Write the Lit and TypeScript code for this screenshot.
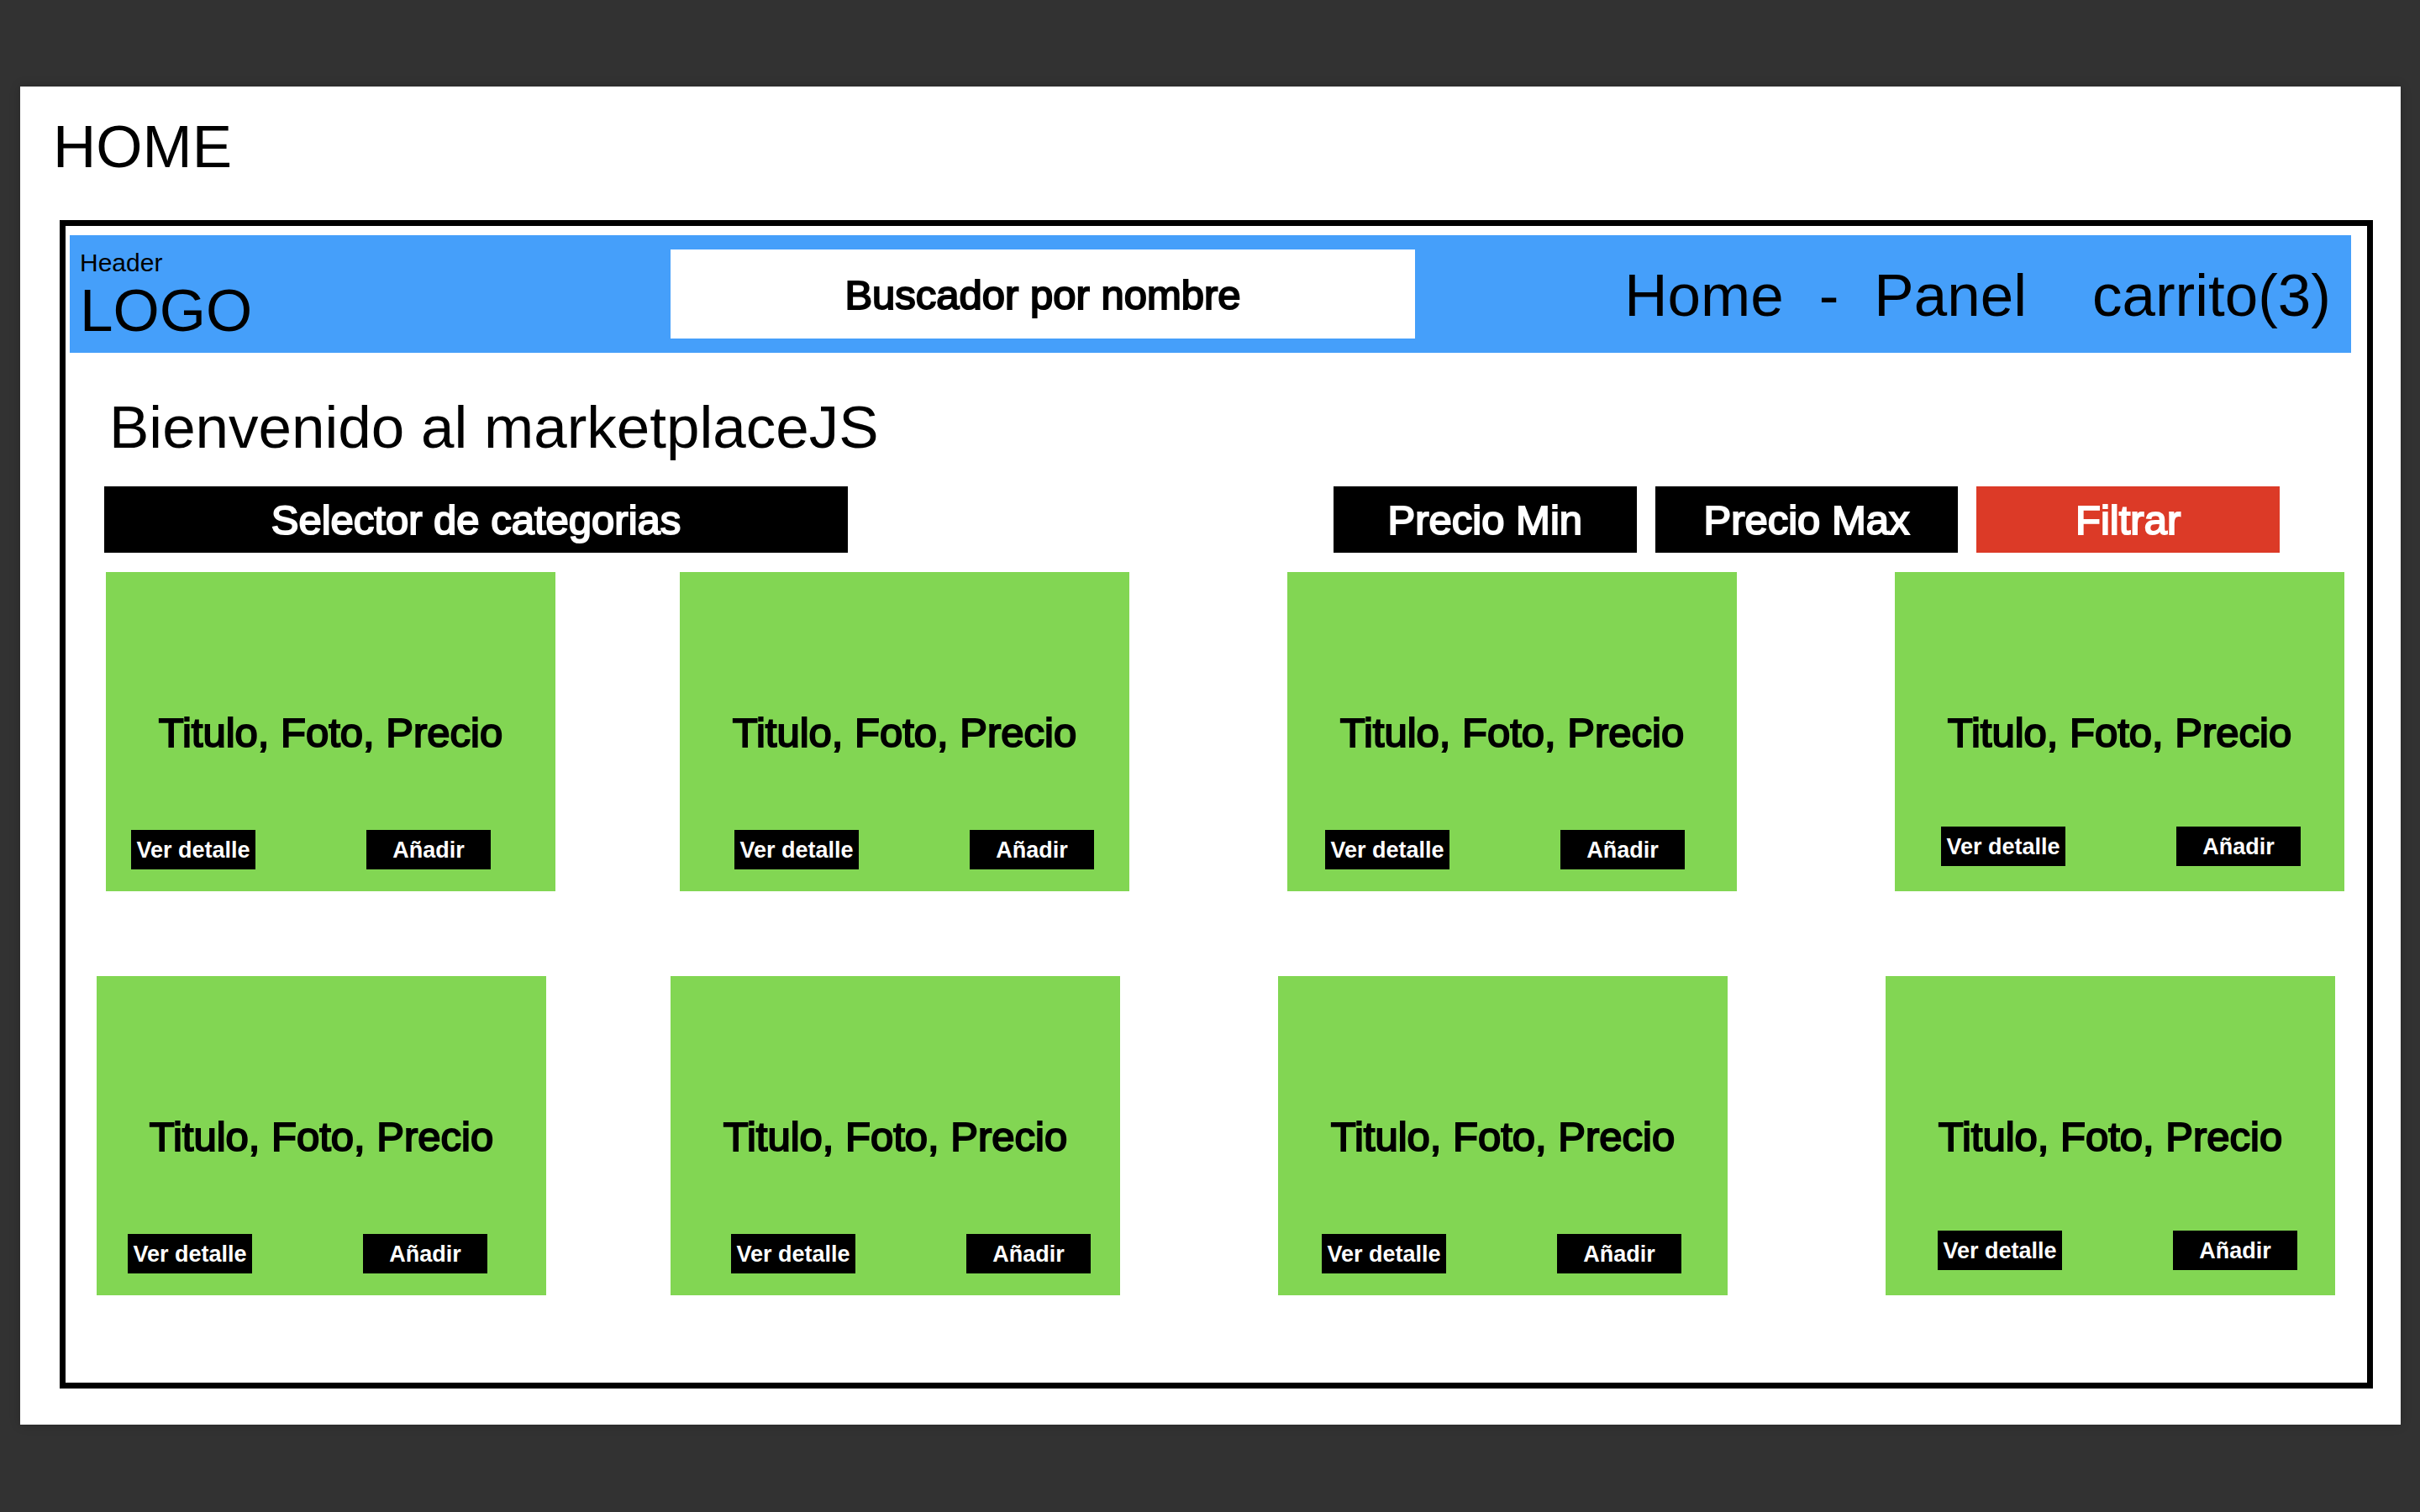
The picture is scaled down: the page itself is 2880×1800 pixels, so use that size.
import { LitElement, html, css } from "lit";
import { customElement, property } from "lit/decorators.js";

interface Product {
  id: number;
  summary: string;
}

const SUMMARY = "Titulo, Foto, Precio";

const ROWS: Product[][] = [
  [1, 2, 3, 4].map((id) => ({ id, summary: SUMMARY })),
  [5, 6, 7, 8].map((id) => ({ id, summary: SUMMARY })),
];

@customElement("product-card")
export class ProductCard extends LitElement {
  @property({ attribute: false }) product!: Product;

  static styles = css`
    :host {
      display: grid;
      min-height: 380px;
      background: #82d653;
      color: #000;
    }
    .summary,
    .actions {
      grid-area: 1 / 1;
    }
    .summary {
      place-self: center;
      margin: 0;
      padding-top: 2px;
      font-size: 49px;
      line-height: 60px;
      font-weight: 400;
      white-space: nowrap;
      -webkit-text-stroke: 2px currentColor;
    }
    .actions {
      display: flex;
      align-self: end;
      gap: 132px;
      padding-left: var(--actions-inset, 30px);
      padding-bottom: var(--actions-bottom, 26px);
    }
    .action {
      box-sizing: border-box;
      width: 148px;
      height: 47px;
      padding: 2px 0 0;
      border: 0;
      background: #000;
      color: #fff;
      font: inherit;
      font-size: 27px;
      font-weight: 700;
      line-height: 45px;
      white-space: nowrap;
      cursor: pointer;
    }
  `;

  render() {
    return html`
      <h3 class="summary">${this.product.summary}</h3>
      <div class="actions">
        <button class="action" type="button">Ver detalle</button>
        <button class="action" type="button">Añadir</button>
      </div>
    `;
  }
}

@customElement("app-root")
export class AppRoot extends LitElement {
  static styles = css`
    :host {
      display: block;
      box-sizing: border-box;
      min-height: 100vh;
      padding: 103px 23px 103px 24px;
      background: #323232;
      color: #000;
      font-family: "Liberation Sans", Arial, sans-serif;
    }
    .page {
      padding: 30px 33px 43px 47px;
      background: #fff;
      box-shadow: 0 0 12px rgba(0, 0, 0, 0.2);
    }
    .page-title,
    .welcome {
      margin: 0;
      font-size: 71px;
      line-height: 84px;
      font-weight: 400;
    }
    .page-title {
      margin: 0 0 45px -8px;
    }
    .frame {
      border: 7px solid #000;
      padding: 11px 19px 104px 5px;
    }
    .header {
      display: grid;
      grid-template-columns: 715fr 886fr 1114fr;
      align-items: center;
      min-height: 140px;
      background: #459ffa;
    }
    .brand {
      padding: 5px 0 0 12px;
    }
    .brand-label {
      display: block;
      font-size: 30px;
      line-height: 34px;
    }
    .logo {
      display: block;
      font-size: 71px;
      line-height: 80px;
      color: inherit;
      text-decoration: none;
    }
    .field {
      display: block;
      box-sizing: border-box;
      width: 100%;
      min-width: 0;
      height: 79px;
      margin: 0;
      padding: 0;
      border: 0;
      border-radius: 0;
      background: #000;
      color: #fff;
      font: inherit;
      font-size: 49px;
      line-height: 60px;
      text-align: center;
      text-align-last: center;
      appearance: none;
      -webkit-text-stroke: 2px currentColor;
    }
    .field::placeholder {
      color: inherit;
      opacity: 1;
    }
    .search {
      height: 106px;
      padding-top: 2px;
      background: #fff;
      color: #000;
    }
    .search::-webkit-search-cancel-button {
      display: none;
    }
    .submit {
      background: #dc3a27;
      cursor: pointer;
    }
    .nav {
      display: flex;
      justify-content: flex-end;
      gap: 42px;
      padding: 4px 24px 0 0;
      font-size: 71px;
      line-height: 84px;
      white-space: nowrap;
    }
    .nav-link {
      color: inherit;
      text-decoration: none;
    }
    .cart {
      margin-left: 36px;
    }
    .welcome {
      margin: 47px 0 28px 47px;
    }
    .filters {
      display: grid;
      grid-template-columns: 885fr 1126fr;
      column-gap: 578px;
      margin: 0 85px 23px 41px;
    }
    .prices {
      display: grid;
      grid-template-columns: repeat(3, 1fr);
      column-gap: 22px;
    }
    .row {
      display: grid;
      grid-template-columns: 535fr 148fr 535fr 188fr 535fr 188fr 535fr;
      margin: 0 8px 0 43px;
      padding: 0;
      list-style: none;
    }
    .row + .row {
      margin: 101px 19px 0 32px;
    }
    .cell {
      --actions-inset: 30px;
    }
    .cell:nth-child(2) {
      grid-column: 3;
      --actions-inset: 65px;
    }
    .cell:nth-child(3) {
      grid-column: 5;
      --actions-inset: 45px;
    }
    .cell:nth-child(4) {
      grid-column: 7;
      --actions-inset: 55px;
      --actions-bottom: 30px;
    }
    .row + .row .cell {
      --actions-inset: 37px;
    }
    .row + .row .cell:nth-child(2) {
      --actions-inset: 72px;
    }
    .row + .row .cell:nth-child(3) {
      --actions-inset: 52px;
    }
    .row + .row .cell:nth-child(4) {
      --actions-inset: 62px;
    }
  `;

  render() {
    return html`
      <main class="page">
        <h1 class="page-title">HOME</h1>
        <div class="frame">
          <header class="header">
            <div class="brand">
              <span class="brand-label">Header</span>
              <a class="logo" href="#">LOGO</a>
            </div>
            <input
              class="field search"
              type="search"
              aria-label="Buscador por nombre"
              placeholder="Buscador por nombre"
            />
            <nav class="nav">
              <a class="nav-link" href="#home">Home</a>
              <span>-</span>
              <a class="nav-link" href="#panel">Panel</a>
              <a class="nav-link cart" href="#carrito">carrito(3)</a>
            </nav>
          </header>
          <h2 class="welcome">Bienvenido al marketplaceJS</h2>
          <form class="filters" @submit=${(e: Event) => e.preventDefault()}>
            <select class="field" aria-label="Selector de categorias">
              <option>Selector de categorias</option>
            </select>
            <div class="prices">
              <input class="field" type="text" inputmode="numeric" aria-label="Precio Min" placeholder="Precio Min" />
              <input class="field" type="text" inputmode="numeric" aria-label="Precio Max" placeholder="Precio Max" />
              <button class="field submit" type="submit">Filtrar</button>
            </div>
          </form>
          ${ROWS.map(
            (row) => html`
              <ul class="row">
                ${row.map(
                  (product) => html`
                    <li class="cell"><product-card .product=${product}></product-card></li>
                  `
                )}
              </ul>
            `
          )}
        </div>
      </main>
    `;
  }
}
